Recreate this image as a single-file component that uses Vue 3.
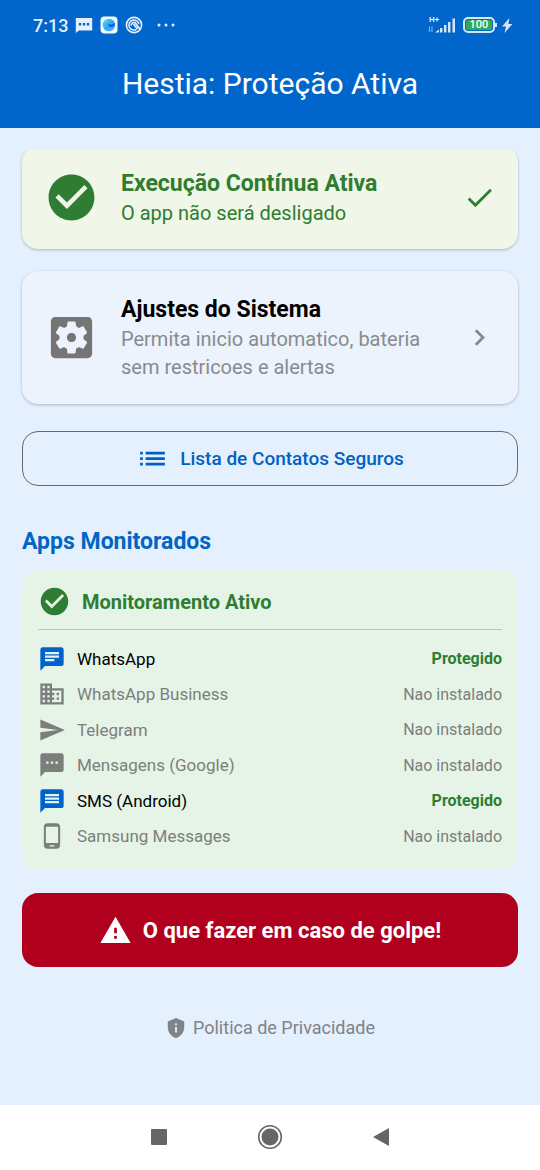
<script setup>
const icons = {
  chat: 'M20 2H4c-1.100 0-1.990.9-1.990 2L2 22l4-4h14c1.100 0 2-.9 2-2V4c0-1.100-.9-2-2-2zM6 9h12v2H6V9zm8 5H6v-2h8v2zm4-6H6V6h12v2z',
  business: 'M12 7V3H2v18h20V7H12zM6 19H4v-2h2v2zm0-4H4v-2h2v2zm0-4H4V9h2v2zm0-4H4V5h2v2zm4 12H8v-2h2v2zm0-4H8v-2h2v2zm0-4H8V9h2v2zm0-4H8V5h2v2zm10 12h-8v-2h2v-2h-2v-2h2v-2h-2V9h8v10zm-2-8h-2v2h2v-2zm0 4h-2v2h2v-2z',
  send: 'M2.010 21L23 12 2.010 3 2 10l15 2-15 2z',
  sms: 'M20 2H4c-1.100 0-1.990.9-1.990 2L2 22l4-4h14c1.100 0 2-.9 2-2V4c0-1.100-.9-2-2-2zM9 11H7V9h2v2zm4 0h-2V9h2v2zm4 0h-2V9h2v2z',
  message: 'M20 2H4c-1.100 0-1.990.9-1.990 2L2 22l4-4h14c1.100 0 2-.9 2-2V4c0-1.100-.9-2-2-2zm-2 12H6v-2h12v2zm0-3H6V9h12v2zm0-3H6V6h12v2z',
  phone: 'M16 1H8C6.340 1 5 2.340 5 4v16c0 1.660 1.340 3 3 3h8c1.660 0 3-1.340 3-3V4c0-1.660-1.340-3-3-3zm-2 20h-4v-1h4v1zm3.250-3H6.750V4h10.500v14z',
}

const apps = [
  { name: 'WhatsApp', icon: 'chat', active: true },
  { name: 'WhatsApp Business', icon: 'business', active: false },
  { name: 'Telegram', icon: 'send', active: false },
  { name: 'Mensagens (Google)', icon: 'sms', active: false },
  { name: 'SMS (Android)', icon: 'message', active: true },
  { name: 'Samsung Messages', icon: 'phone', active: false },
]
</script>

<template>
  <div class="screen">
    <header class="top">
      <div class="status">
        <span class="clock">7:13</span>
        <svg class="s-icon" viewBox="0 0 18 18">
          <path fill="#e3efff" fill-rule="evenodd" d="M.8 2h16.400v12.500H4L.8 17zM3.800 7v2.400h2.400V7zm4 0v2.400h2.400V7zm4 0v2.400h2.400V7z" />
        </svg>
        <svg class="s-icon" viewBox="0 0 18 18">
          <defs>
            <linearGradient id="orb" x1="0" y1="0" x2="1" y2="1">
              <stop offset="0" stop-color="#5fe0e8" />
              <stop offset=".5" stop-color="#2aa8f4" />
              <stop offset="1" stop-color="#5ab4ff" />
            </linearGradient>
          </defs>
          <rect x=".5" y=".5" width="17" height="17" rx="4" fill="#f2faff" />
          <circle cx="9" cy="9" r="6.300" fill="url(#orb)" />
          <path d="M8 8c2 1.500 4 .5 6.500-1 .8 3-2 4.500-4 4C9 10.500 8 9.500 8 8z" fill="#1557d8" />
        </svg>
        <svg class="s-icon" viewBox="0 0 18 18" fill="none" stroke="#e3efff">
          <circle cx="9" cy="9" r="7.600" stroke-width="1.600" />
          <path d="M11.500 13.300A5 5 0 1 1 13.800 8" stroke-width="1.500" />
          <path d="M6 9.500c.5-2.500 2.500-3.500 4-3l5.500 7.500" stroke-width="1.800" />
          <path d="M8.500 8l4 5" stroke-width="1.800" />
        </svg>
        <svg class="s-more" viewBox="0 0 20 18" fill="#e3efff">
          <circle cx="3" cy="9" r="1.500" /><circle cx="10" cy="9" r="1.500" /><circle cx="17" cy="9" r="1.500" />
        </svg>
        <div class="status-right">
          <div class="network">
            <span class="net-type">H+</span>
            <svg viewBox="0 0 30 18" fill="#d5e6fb">
              <path d="M2 10.500h1v5H2zM1.200 14h2.600l-1.300 2zM4.500 11.500h1V16h-1zM3.800 12h2.400L5 10z" opacity=".6" />
              <path d="M8 16.500l4-3v3zM13 12h2.400v4.500H13zM17 9h2.400v7.500H17zM21 6h2.400v10.500H21zM25.500 2.500H28v14h-2.500z" />
            </svg>
          </div>
          <div class="battery"><span>100</span></div>
          <svg class="bolt" viewBox="0 0 12 18"><path fill="#d5e6fb" d="M8.500 2L1 10.500h4L3.500 17 11.500 8H7.300z" /></svg>
        </div>
      </div>
      <h1>Hestia: Proteção Ativa</h1>
    </header>

    <main>
      <div class="scroller">
        <section class="card ok">
          <svg class="lead" viewBox="0 0 24 24" fill="currentColor"><path d="M12 2C6.480 2 2 6.480 2 12s4.480 10 10 10 10-4.480 10-10S17.520 2 12 2zm-2 15l-5-5 1.410-1.410L10 14.170l7.590-7.590L19 8l-9 9z" /></svg>
          <div class="card-text">
            <h2>Execução Contínua Ativa</h2>
            <p>O app não será desligado</p>
          </div>
          <svg class="i33" viewBox="0 0 24 24" fill="currentColor"><path d="M9 16.170L4.830 12l-1.420 1.410L9 19 21 7l-1.410-1.410z" /></svg>
        </section>

        <button class="card settings" type="button">
          <svg class="lead" viewBox="0 0 24 24" fill="#757575">
            <path d="M12 10c-1.100 0-2 .9-2 2s.9 2 2 2 2-.9 2-2-.9-2-2-2zm7-7H5c-1.110 0-2 .9-2 2v14c0 1.100.89 2 2 2h14c1.110 0 2-.9 2-2V5c0-1.100-.89-2-2-2zm-1.750 9c0 .23-.02.46-.05.68l1.480 1.160c.13.11.17.3.08.45l-1.400 2.420c-.09.15-.27.21-.43.15l-1.740-.7c-.36.28-.76.51-1.180.69l-.26 1.850c-.03.17-.18.3-.35.3h-2.800c-.17 0-.32-.13-.35-.29l-.26-1.850c-.43-.18-.82-.41-1.180-.69l-1.740.7c-.16.06-.34 0-.43-.15l-1.400-2.420c-.09-.15-.05-.34.08-.45l1.480-1.160c-.03-.23-.05-.46-.05-.69 0-.23.02-.46.05-.68l-1.480-1.160c-.13-.11-.17-.3-.08-.45l1.400-2.420c.09-.15.27-.21.43-.15l1.740.7c.36-.28.76-.51 1.180-.69l.26-1.850c.03-.17.18-.3.35-.3h2.800c.17 0 .32.13.35.29l.26 1.850c.43.18.82.41 1.180.69l1.740-.7c.16-.06.34 0 .43.15l1.400 2.420c.09.15.05.34-.08.45l-1.480 1.160c.03.23.05.46.05.69z" />
          </svg>
          <span class="card-text">
            <strong>Ajustes do Sistema</strong>
            <span class="desc">Permita inicio automatico, bateria sem restricoes e alertas</span>
          </span>
          <svg class="i33" viewBox="0 0 24 24" fill="#858a8f"><path d="M10 6L8.590 7.410 13.170 12l-4.580 4.590L10 18l6-6z" /></svg>
        </button>

        <button class="outlined" type="button">
          <svg class="i33" viewBox="0 0 24 24" fill="currentColor"><path d="M3 13h2v-2H3v2zm0 4h2v-2H3v2zm0-8h2V7H3v2zm4 4h14v-2H7v2zm0 4h14v-2H7v2zM7 7v2h14V7H7z" /></svg>
          Lista de Contatos Seguros
        </button>

        <h2 class="section-title">Apps Monitorados</h2>

        <section class="monitor">
          <div class="monitor-head">
            <svg class="i33" viewBox="0 0 24 24" fill="currentColor"><path d="M12 2C6.480 2 2 6.480 2 12s4.480 10 10 10 10-4.480 10-10S17.520 2 12 2zm-2 15l-5-5 1.410-1.410L10 14.170l7.590-7.590L19 8l-9 9z" /></svg>
            <h3>Monitoramento Ativo</h3>
          </div>
          <ul>
            <li v-for="app in apps" :key="app.name" :class="{ active: app.active }">
              <svg viewBox="0 0 24 24" fill="currentColor"><path :d="icons[app.icon]" /></svg>
              <span class="name">{{ app.name }}</span>
              <span class="state">{{ app.active ? 'Protegido' : 'Nao instalado' }}</span>
            </li>
          </ul>
        </section>

        <button class="danger" type="button">
          <svg class="i33" viewBox="0 0 24 24" fill="currentColor"><path d="M1 21h22L12 2 1 21zm12-3h-2v-2h2v2zm0-4h-2v-4h2v4z" /></svg>
          O que fazer em caso de golpe!
        </button>

        <a class="privacy" href="#privacidade">
          <svg viewBox="0 0 24 24" fill="currentColor"><path d="M12 1L3 5v6c0 5.550 3.840 10.740 9 12 5.160-1.260 9-6.450 9-12V5l-9-4zm-1 6h2v2h-2V7zm0 4h2v6h-2v-6z" /></svg>
          Politica de Privacidade
        </a>
      </div>
    </main>

    <nav class="system-nav">
      <button type="button" aria-label="Recentes"><svg viewBox="0 0 26 26"><rect x="5" y="5" width="16" height="16" rx="1" fill="#666" /></svg></button>
      <button type="button" aria-label="Início">
        <svg viewBox="0 0 26 26"><circle cx="13" cy="13" r="11.300" fill="none" stroke="#666" stroke-width="1.600" /><circle cx="13" cy="13" r="8.500" fill="#666" /></svg>
      </button>
      <button type="button" aria-label="Voltar"><svg viewBox="0 0 26 26"><path d="M5 13L21 4v18z" fill="#666" /></svg></button>
    </nav>
  </div>
</template>

<style>
body {
  margin: 0;
  background: #e4f0fe;
}
</style>

<style scoped>
.screen {
  min-height: 100vh;
  display: flex;
  flex-direction: column;
  background: #e4f0fe;
  color: #000;
  font-family: Roboto, "Liberation Sans", sans-serif;
}
h1, h2, h3, p, ul {
  margin: 0;
  padding: 0;
}
svg {
  flex: none;
  display: block;
}
button {
  font: inherit;
  color: inherit;
  border: 0;
  cursor: pointer;
}
.top {
  padding-bottom: 26px;
  background: #0066cc;
  color: #fff;
}
.status {
  display: flex;
  align-items: center;
  gap: 7px;
  height: 50px;
  padding: 0 27px 0 33px;
  color: #e3efff;
}
.clock {
  font-size: 18px;
  font-weight: 500;
}
.s-icon {
  width: 18px;
  height: 18px;
}
.s-more {
  width: 20px;
  height: 18px;
  margin-left: 6px;
}
.status-right {
  display: flex;
  align-items: center;
  gap: 6px;
  margin-left: auto;
}
.network {
  position: relative;
}
.network svg {
  width: 30px;
  height: 18px;
}
.net-type {
  position: absolute;
  left: 2px;
  top: 0;
  font-size: 8px;
  line-height: 8px;
  font-weight: 700;
}
.battery {
  position: relative;
  box-sizing: border-box;
  width: 32px;
  height: 16px;
  padding: 1px;
  border: 2px solid #d5e6fb;
  border-radius: 5px;
}
.battery span {
  display: block;
  height: 10px;
  border-radius: 2px;
  background: #35a853;
  color: #fff;
  font-size: 11px;
  line-height: 10px;
  font-weight: 500;
  text-align: center;
}
.battery::after {
  content: "";
  position: absolute;
  right: -4px;
  top: 4px;
  width: 2px;
  height: 4px;
  background: #d5e6fb;
}
.bolt {
  width: 12px;
  height: 18px;
}
h1 {
  font-size: 30px;
  line-height: 36px;
  font-weight: 400;
  text-align: center;
  margin-top: 16px;
}
main {
  flex: 1;
  padding: 22px;
}
.scroller {
  display: flex;
  flex-direction: column;
  overflow-x: visible;
  overflow-y: clip;
}
.card {
  display: flex;
  align-items: center;
  gap: 22px;
  padding: 22px;
  border-radius: 16px;
  text-align: left;
  box-shadow: 0 1px 3px rgba(60, 80, 110, .35);
}
.card.ok {
  margin-top: -4px;
  background: #f0f6e8;
  color: #2e7d32;
}
.card.settings {
  margin-top: 22px;
  padding: 23px 22px;
  background: #ecf3fc;
}
.lead {
  width: 55px;
  height: 55px;
}
.i33 {
  width: 33px;
  height: 33px;
}
.card-text {
  flex: 1;
  min-width: 0;
}
.card h2, .card strong {
  display: block;
  font-size: 23px;
  line-height: 31px;
  font-weight: 700;
}
.card p, .desc {
  display: block;
  font-size: 20px;
  line-height: 28px;
}
.desc {
  color: #888b8f;
}
.outlined {
  display: flex;
  align-items: center;
  justify-content: center;
  gap: 11px;
  height: 55px;
  margin-top: 27px;
  border: 1px solid #666972;
  border-radius: 16px;
  background: none;
  color: #0061c2;
  font-size: 19px;
  font-weight: 500;
}
.section-title {
  margin-top: 39px;
  color: #0066c4;
  font-size: 23px;
  line-height: 33px;
  font-weight: 700;
}
.monitor {
  margin-top: 12px;
  padding: 15px 16px 16px;
  border-radius: 16px;
  background: #e6f4e7;
}
.monitor-head {
  display: flex;
  align-items: center;
  gap: 11px;
  padding-bottom: 11px;
  border-bottom: 1px solid #bcc3bd;
  color: #2e7d32;
}
.monitor-head h3 {
  font-size: 20px;
  line-height: 28px;
  font-weight: 700;
}
.monitor ul {
  display: grid;
  grid-template-rows: repeat(6, 1fr);
  min-height: 213px;
  margin-top: 11px;
  list-style: none;
}
.monitor li {
  display: flex;
  align-items: center;
  gap: 11px;
  color: #7b7f7c;
}
.monitor li svg {
  width: 28px;
  height: 28px;
}
.name {
  flex: 1;
  font-size: 17px;
}
.state {
  font-size: 16px;
}
.active svg {
  color: #0062cc;
}
.active .name {
  color: #000;
}
.active .state {
  color: #2e7d32;
  font-weight: 700;
}
.danger {
  display: flex;
  align-items: center;
  justify-content: center;
  gap: 11px;
  height: 74px;
  margin-top: 23px;
  border-radius: 16px;
  background: #b0001e;
  color: #fff;
  font-size: 22px;
  font-weight: 700;
}
.privacy {
  display: flex;
  align-items: center;
  align-self: center;
  gap: 6px;
  margin-top: 47px;
  color: #808387;
  font-size: 18px;
  line-height: 28px;
  text-decoration: none;
}
.privacy svg {
  width: 22px;
  height: 22px;
}
.system-nav {
  display: flex;
  justify-content: center;
  gap: 85px;
  padding: 19px 0 20px;
  background: #fff;
}
.system-nav button {
  padding: 0;
  background: none;
}
.system-nav svg {
  width: 26px;
  height: 26px;
}
</style>
